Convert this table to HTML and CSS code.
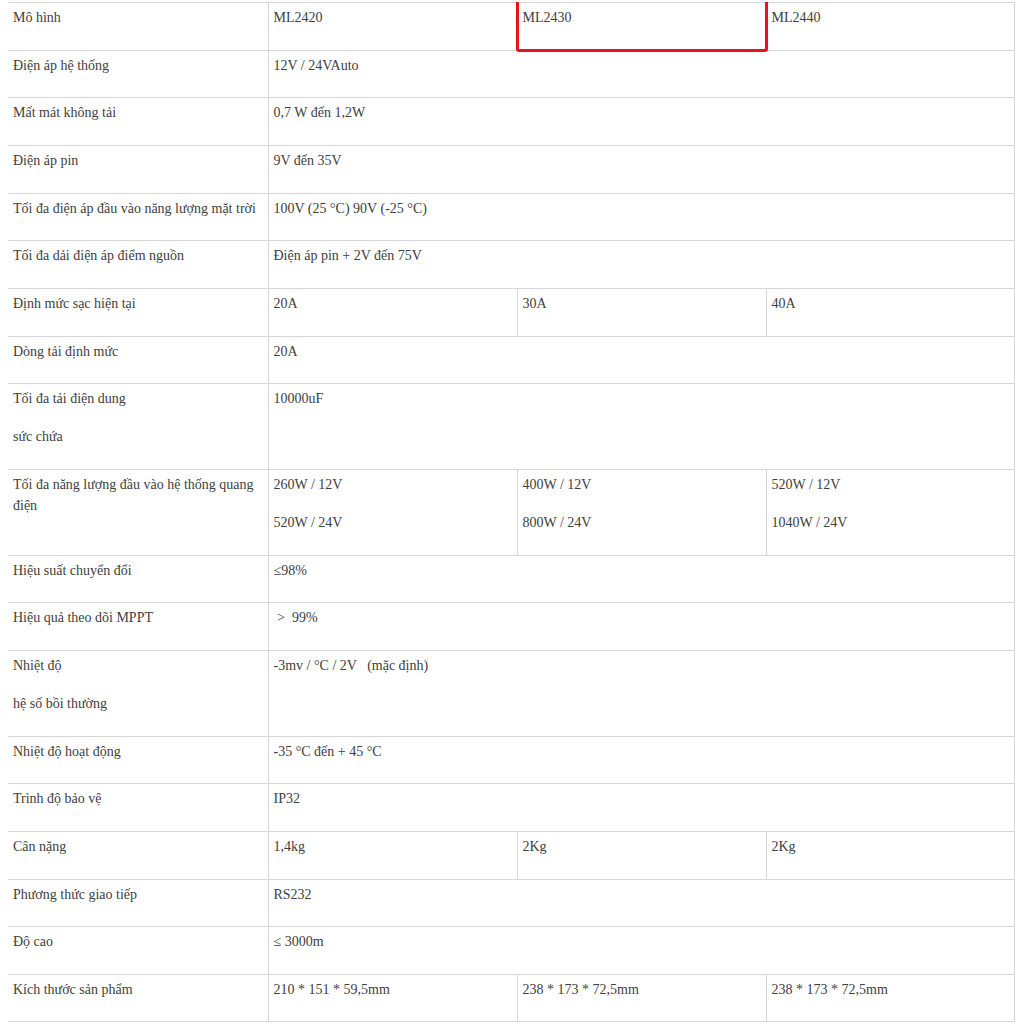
FILE: index.html
```html
<!DOCTYPE html>
<html lang="vi">
<head>
<meta charset="utf-8">
<title>Thông số kỹ thuật</title>
<link rel="stylesheet" href="styles.css">
</head>
<body>
<div class="wrap">
<table class="spec">
<colgroup><col class="c1"><col class="c2"><col class="c3"><col class="c4"></colgroup>
<tbody>
<tr><td><p>Mô hình</p></td><td><p>ML2420</p></td><td><p>ML2430</p></td><td><p>ML2440</p></td></tr>
<tr><td><p>Điện áp hệ thống</p></td><td colspan="3"><p>12V / 24VAuto</p></td></tr>
<tr><td><p>Mất mát không tải</p></td><td colspan="3"><p>0,7 W đến 1,2W</p></td></tr>
<tr><td><p>Điện áp pin</p></td><td colspan="3"><p>9V đến 35V</p></td></tr>
<tr><td><p>Tối đa điện áp đầu vào năng lượng mặt trời</p></td><td colspan="3"><p>100V (25 °C) 90V (-25 °C)</p></td></tr>
<tr><td><p>Tối đa dải điện áp điểm nguồn</p></td><td colspan="3"><p>Điện áp pin + 2V đến 75V</p></td></tr>
<tr><td><p>Định mức sạc hiện tại</p></td><td><p>20A</p></td><td><p>30A</p></td><td><p>40A</p></td></tr>
<tr><td><p>Dòng tải định mức</p></td><td colspan="3"><p>20A</p></td></tr>
<tr><td><p>Tối đa tải điện dung</p><p>sức chứa</p></td><td colspan="3"><p>10000uF</p></td></tr>
<tr><td><p>Tối đa năng lượng đầu vào hệ thống quang điện</p></td><td><p>260W / 12V</p><p>520W / 24V</p></td><td><p>400W / 12V</p><p>800W / 24V</p></td><td><p>520W / 12V</p><p>1040W / 24V</p></td></tr>
<tr><td><p>Hiệu suất chuyển đổi</p></td><td colspan="3"><p>≤98%</p></td></tr>
<tr><td><p>Hiệu quả theo dõi MPPT</p></td><td colspan="3"><p>&nbsp;&gt;&nbsp; 99%</p></td></tr>
<tr><td><p>Nhiệt độ</p><p>hệ số bồi thường</p></td><td colspan="3"><p>-3mv / °C / 2V &nbsp;&nbsp;(mặc định)</p></td></tr>
<tr><td><p>Nhiệt độ hoạt động</p></td><td colspan="3"><p>-35 °C đến + 45 °C</p></td></tr>
<tr><td><p>Trình độ bảo vệ</p></td><td colspan="3"><p>IP32</p></td></tr>
<tr><td><p>Cân nặng</p></td><td><p>1,4kg</p></td><td><p>2Kg</p></td><td><p>2Kg</p></td></tr>
<tr><td><p>Phương thức giao tiếp</p></td><td colspan="3"><p>RS232</p></td></tr>
<tr><td><p>Độ cao</p></td><td colspan="3"><p>≤ 3000m</p></td></tr>
<tr><td><p>Kích thước sản phẩm</p></td><td><p>210 * 151 * 59,5mm</p></td><td><p>238 * 173 * 72,5mm</p></td><td><p>238 * 173 * 72,5mm</p></td></tr>
</tbody>
</table>
<div class="highlight"></div>
</div>
</body>
</html>
```
FILE: styles.css
```css
html, body {
  background: #ffffff;
}
body {
  margin: 2px 8px 0;
  font-family: "Liberation Serif", "Times New Roman", serif;
  font-size: 14px;
  color: #404040;
}
.wrap {
  position: relative;
  width: 1006px;
}
.spec {
  width: 1006px;
  table-layout: fixed;
  border-collapse: collapse;
  border-top: 1px solid #d6d6d6;
}
.c1 { width: 260px; }
.c2 { width: 249px; }
.c3 { width: 249px; }
.c4 { width: 248px; }
.spec td {
  border-bottom: 1px solid #d6d6d6;
  border-right: 1px solid #d6d6d6;
  padding: 4px 0 4.67px 5px;
  vertical-align: top;
  line-height: 21px;
}
.spec td p {
  margin: 0 0 17px;
}
.highlight {
  position: absolute;
  left: 508px;
  top: -12px;
  width: 246px;
  height: 56px;
  border: 3px solid #e8141b;
  border-radius: 3px;
}
```
